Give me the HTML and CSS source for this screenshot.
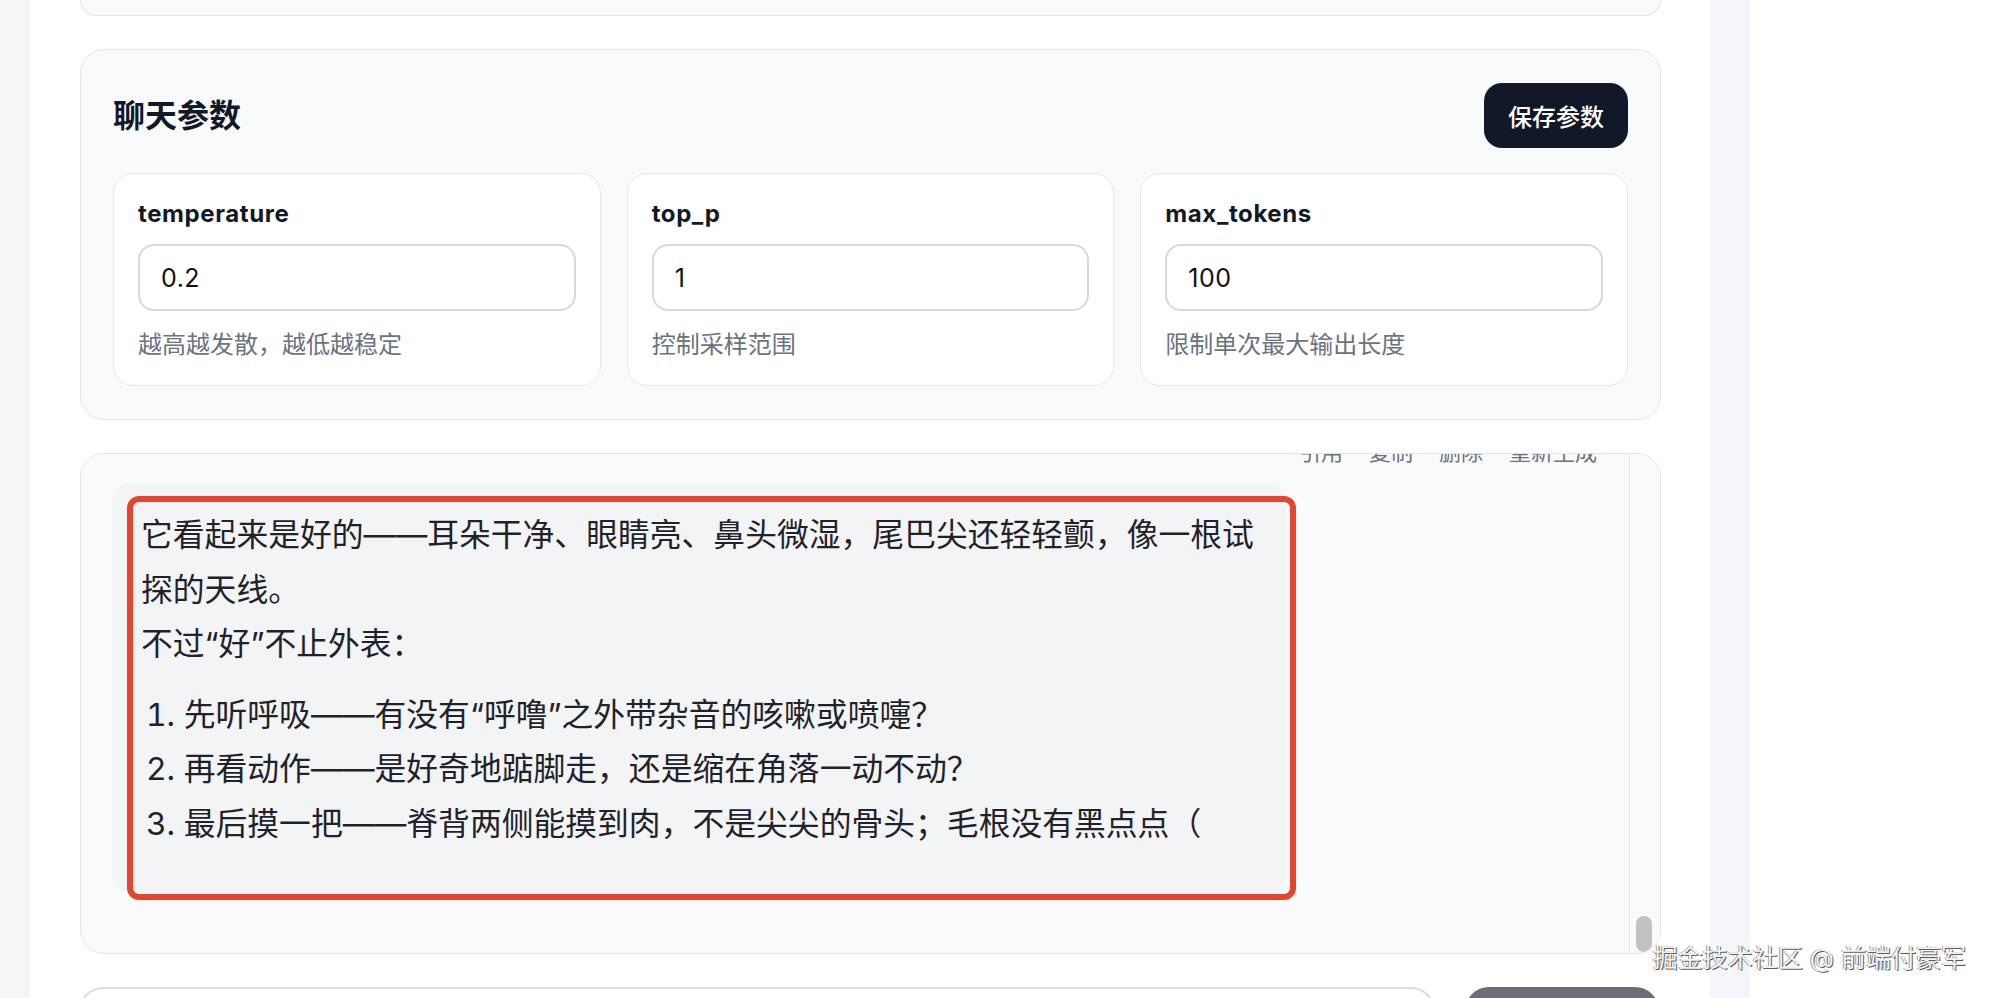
FILE: index.html
```html
<!DOCTYPE html>
<html lang="zh-CN">
<head>
    <meta charset="UTF-8">
    <meta name="viewport" content="width=device-width, initial-scale=1.0">
    <title>聊天设置</title>
    <link rel="stylesheet" href="styles.css">
</head>
<body>
    <div class="app">
        <aside class="sidebar"></aside>

        <main class="main">
            <div class="stack">
                <!-- tail of the section above -->
                <section class="panel panel-prev"></section>

                <section class="panel params">
                    <header class="panel-head">
                        <h2>聊天参数</h2>
                        <button class="btn-dark" type="button">保存参数</button>
                    </header>
                    <div class="param-grid">
                        <div class="param">
                            <label for="temperature">temperature</label>
                            <input id="temperature" type="text" value="0.2">
                            <p class="hint">越高越发散，越低越稳定</p>
                        </div>
                        <div class="param">
                            <label for="topP">top_p</label>
                            <input id="topP" type="text" value="1">
                            <p class="hint">控制采样范围</p>
                        </div>
                        <div class="param">
                            <label for="maxTokens">max_tokens</label>
                            <input id="maxTokens" type="text" value="100">
                            <p class="hint">限制单次最大输出长度</p>
                        </div>
                    </div>
                </section>

                <section class="panel chat">
                    <div class="messages">
                        <div class="msg-actions">
                            <button type="button">引用</button>
                            <button type="button">复制</button>
                            <button type="button">删除</button>
                            <button type="button">重新生成</button>
                        </div>
                        <div class="bubble-wrap">
                            <div class="bubble">
                                <p>它看起来是好的——耳朵干净、眼睛亮、鼻头微湿，尾巴尖还轻轻颤，像一根试探的天线。<br>不过“好”不止外表：</p>
                                <ol>
                                    <li>先听呼吸——有没有“呼噜”之外带杂音的咳嗽或喷嚏？</li>
                                    <li>再看动作——是好奇地踮脚走，还是缩在角落一动不动？</li>
                                    <li>最后摸一把——脊背两侧能摸到肉，不是尖尖的骨头；毛根没有黑点点（</li>
                                </ol>
                            </div>
                            <span class="highlight"></span>
                        </div>
                    </div>
                    <div class="scroll-track"><span class="scroll-thumb"></span></div>
                </section>

                <div class="composer">
                    <textarea rows="3"></textarea>
                    <button class="btn-send" type="button" disabled>发送</button>
                </div>
            </div>
        </main>

        <aside class="rail"></aside>
    </div>

    <div class="watermark">掘金技术社区 @ 前端付豪军</div>
</body>
</html>
```

FILE: styles.css
```css
html, body { margin: 0; height: 100%; }
body {
    font-family: Inter, "Noto Sans CJK SC", sans-serif;
    background: #fff;
    color: #111827;
    overflow: hidden;
}

.app { display: flex; height: 998px; }
.sidebar { width: 30px; flex: none; background: #f4f5f7; }
.main { width: 1680px; flex: none; padding: 0 49px 0 50px; box-sizing: border-box; background: #fff; }
.rail { width: 40px; flex: none; background: #f4f5f9; }

.stack { display: flex; flex-direction: column; gap: 33px; }

.panel {
    background: #f9fafb;
    border: 1px solid #e4e5e8;
    border-radius: 24px;
    box-sizing: border-box;
}
.panel-prev { height: 16px; border-top: none; border-radius: 0 0 24px 24px; }

/* chat parameters */
.params { padding: 33px 32px; }
.panel-head {
    display: flex;
    justify-content: space-between;
    align-items: center;
    margin-bottom: 25px;
}
.panel-head h2 { margin: 0; font-size: 32px; font-weight: 700; line-height: 44px; color: #111827; }
.btn-dark {
    height: 65px;
    padding: 0 24px;
    border: none;
    border-radius: 18px;
    background: #111827;
    color: #fff;
    font-family: inherit;
    font-size: 24px;
    font-weight: 500;
}

.param-grid { display: grid; grid-template-columns: repeat(3, 1fr); gap: 26px; }
.param {
    background: #fff;
    border: 1px solid #e6e7ea;
    border-radius: 20px;
    padding: 24px;
}
.param label {
    display: block;
    font-size: 24px;
    font-weight: 700;
    letter-spacing: 0.6px;
    line-height: 32px;
    margin-bottom: 14px;
    color: #111827;
}
.param input {
    display: block;
    width: 100%;
    height: 67px;
    box-sizing: border-box;
    padding: 0 21px;
    border: 2px solid #d7d8dc;
    border-radius: 16px;
    font-family: inherit;
    font-size: 25px;
    letter-spacing: 0.5px;
    color: #111;
    background: #fff;
    outline: none;
}
.hint { margin: 18px 0 0; font-size: 24px; line-height: 32px; color: #6b7280; }

/* chat window */
.chat { height: 501px; display: flex; overflow: hidden; }
.messages {
    flex: 1;
    display: flex;
    flex-direction: column;
    justify-content: flex-end;
    overflow: hidden;
    padding: 0 32px 62px;
}
.msg-actions { display: flex; justify-content: flex-end; gap: 26px; margin-bottom: 14px; }
.msg-actions button {
    border: none;
    background: none;
    padding: 0;
    font-family: inherit;
    font-size: 22px;
    line-height: 33px;
    color: #6b7280;
}

.bubble-wrap { position: relative; align-self: flex-start; width: 1172px; }
.bubble {
    background: #f3f4f6;
    border-radius: 18px;
    padding: 25px 28px 24px;
    box-shadow: 0 1px 3px rgba(0, 0, 0, 0.05);
    font-size: 31.8px;
    line-height: 54.5px;
    color: #1f2329;
}
.bubble p { margin: 0; }
.bubble ol { margin: 16px 0; padding: 0 0 0 5px; list-style-position: inside; }

/* red outline drawn around the answer */
.highlight {
    position: absolute;
    top: 13px;
    left: 14px;
    right: -11px;
    bottom: -9px;
    border: 6px solid #e5442e;
    border-radius: 12px;
    pointer-events: none;
}

.scroll-track {
    width: 31px;
    flex: none;
    display: flex;
    flex-direction: column;
    justify-content: flex-end;
    background: #fafafa;
    border-left: 1px solid #e5e6e8;
    box-sizing: border-box;
}
.scroll-thumb { width: 16px; height: 36px; margin: 0 0 1px 6px; border-radius: 8px; background: #c2c2c2; }

/* message composer */
.composer { display: flex; gap: 30px; margin-left: -1px; margin-right: 2px; }
.composer textarea {
    flex: 1;
    height: 120px;
    border: 2px solid #dcdde0;
    border-radius: 24px;
    background: #fff;
    resize: none;
}
.btn-send {
    width: 194px;
    height: 100px;
    border: none;
    border-radius: 24px;
    background: #6b6e75;
    color: #fff;
    font-size: 24px;
}

.watermark {
    position: absolute;
    right: 26px;
    bottom: 23px;
    font-size: 25px;
    line-height: 34px;
    color: #f4f4f4;
    text-shadow: 1px 1px 0 #5c5c5c, -1px 0 0 #9a9a9a;
    white-space: nowrap;
}
```
